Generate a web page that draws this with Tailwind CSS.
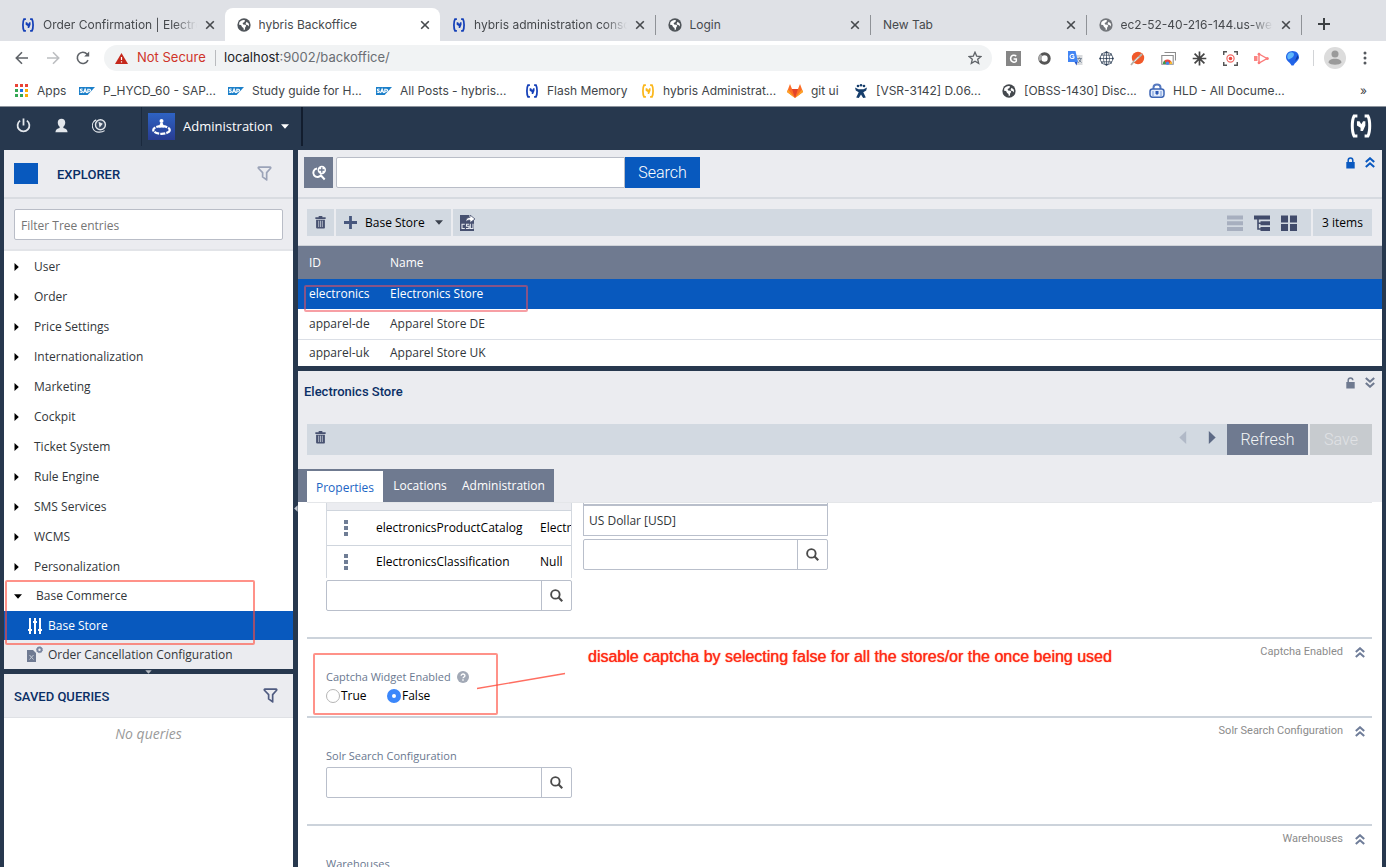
<!DOCTYPE html>
<html lang="en">
<head>
<meta charset="utf-8">
<meta name="viewport" content="width=device-width, initial-scale=1">
<title>hybris Backoffice</title>
<script src="https://cdn.jsdelivr.net/npm/@tailwindcss/browser@4"></script>
</head>
<body class="flex h-screen flex-col overflow-hidden bg-[#27384e] font-['Open_Sans',sans-serif] text-xs text-[#32363a]">

<svg class="hidden" aria-hidden="true">
  <symbol id="hy" viewBox="0 0 16 16"><path d="M5.600 1.400H3.400Q2.200 3.500 2.200 8t1.200 6.600H5.600M10.400 1.400h2.200q1.200 2.100 1.200 6.600t-1.200 6.600H10.400" fill="none" stroke="currentColor" stroke-width="2"/><path d="M5.300 4.800h1.700L8.200 6.800l1.200-2h1.500v2.900L9.300 11.400H7.700V9.200L5.300 7.600z" fill="currentColor"/></symbol>
  <symbol id="globe" viewBox="0 0 16 16"><circle cx="8" cy="8" r="7.600" fill="currentColor"/><path d="M2.600 5.200C4 2.600 6.800 1.800 9 2.400l-.4 2.200-2.200 1.200.6 1.600 2.800.2.800 1.600-1.200 1.400-.4 2.600-1.200.8-.4-2.600-1.600-1L4.600 8 2.400 7.800M11 4.400l2.600 2.200v3l-1.200-1.400-1.800-.4-.8-1.600z" fill="#fff"/></symbol>
  <symbol id="x" viewBox="0 0 10 10"><path d="M1.200 1.200l7.600 7.600M8.800 1.200L1.200 8.800" stroke="currentColor" stroke-width="1.600" fill="none"/></symbol>
  <symbol id="sap" viewBox="0 0 16 8"><path d="M0 0h16L8.600 8H0z" fill="#1b7fc9"/><path d="M3.600 2.200C2 1.600 1 2.400 1.600 3.300l1.600.9c.7 1-.6 1.800-2.200.9M4.400 6l1.700-4 1.700 4M5 4.800h2.200M8.800 6V2.200h1.600c1.600 0 1.600 2 0 2H9" fill="none" stroke="#fff" stroke-width="1.100"/></symbol>
  <symbol id="up2" viewBox="0 0 10 11"><path d="M.8 5l4.200-3.700L9.200 5M.8 10l4.200-3.700L9.200 10" fill="none" stroke="currentColor" stroke-width="2.100"/></symbol>
  <symbol id="funnel" viewBox="0 0 16 16"><path d="M2 1.200h12c.6 0 .9.700.5 1.200L10.300 7v7.800L6 11.600V7L1.500 2.400c-.4-.5-.1-1.200.5-1.200z" fill="none" stroke="currentColor" stroke-width="1.800" stroke-linejoin="round"/></symbol>
  <symbol id="trash" viewBox="0 0 12 14"><path d="M4 0h4v1.200h3.600v2H.4v-2H4zM1.200 4h9.600v8.400c0 .8-.4 1.200-1.200 1.200H2.400c-.8 0-1.200-.4-1.200-1.200z" fill="currentColor"/><path d="M4 5v7M6 5v7M8 5v7" stroke="#d2d9e1" stroke-width=".8"/></symbol>
  <symbol id="mag" viewBox="0 0 14 14"><circle cx="5.800" cy="5.800" r="4.600" fill="none" stroke="currentColor" stroke-width="2"/><path d="M9 9l4.200 4.200" stroke="currentColor" stroke-width="2.300"/></symbol>
  <symbol id="right" viewBox="0 0 5 8"><path d="M.5 0v8L4.800 4z" fill="currentColor"/></symbol>
  <symbol id="down" viewBox="0 0 8 5"><path d="M0 .3h8L4 4.800z" fill="currentColor"/></symbol>
  <symbol id="dots" viewBox="0 0 4 16"><path d="M0 0h4v4H0zM0 6h4v4H0zM0 12h4v4H0z" fill="currentColor"/></symbol>
</svg>

<!-- Browser tabs -->
<nav aria-label="Tabs" class="flex h-[41px] shrink-0 items-end bg-[#dfe1e6] pl-[9px] pr-[84px] font-[Inter,sans-serif] text-xs text-[#46494d]">
  <div class="grid min-w-0 flex-1 grid-cols-6">
  <div class="flex h-[33px] min-w-0 items-center pl-3 pr-[10px]">
    <svg class="size-[14px] shrink-0 text-[#1540b8]"><use href="#hy"/></svg>
    <a href="#" class="ml-2 min-w-0 flex-1 overflow-hidden whitespace-nowrap [mask-image:linear-gradient(to_right,#000_85%,transparent)]">Order Confirmation | Electronics</a>
    <button aria-label="Close" class="ml-2"><svg class="size-[10px]"><use href="#x"/></svg></button>
  </div>
  <div class="flex h-[33px] min-w-0 items-center rounded-t-lg bg-white pl-3 pr-[10px]">
    <svg class="size-[14px] shrink-0 text-[#50555a]"><use href="#globe"/></svg>
    <a href="#" class="ml-2 min-w-0 flex-1 overflow-hidden whitespace-nowrap">hybris Backoffice</a>
    <button aria-label="Close" class="ml-2"><svg class="size-[10px]"><use href="#x"/></svg></button>
  </div>
  <div class="flex h-[33px] min-w-0 items-center pl-3">
    <svg class="size-[14px] shrink-0 text-[#1540b8]"><use href="#hy"/></svg>
    <a href="#" class="ml-2 min-w-0 flex-1 overflow-hidden whitespace-nowrap [mask-image:linear-gradient(to_right,#000_85%,transparent)]">hybris administration console</a>
    <button aria-label="Close" class="ml-2 mr-[10px]"><svg class="size-[10px]"><use href="#x"/></svg></button>
    <span class="h-5 w-px bg-[#8f9297]"></span>
  </div>
  <div class="flex h-[33px] min-w-0 items-center pl-3">
    <svg class="size-[14px] shrink-0 text-[#50555a]"><use href="#globe"/></svg>
    <a href="#" class="ml-2 min-w-0 flex-1 overflow-hidden whitespace-nowrap">Login</a>
    <button aria-label="Close" class="ml-2 mr-[10px]"><svg class="size-[10px]"><use href="#x"/></svg></button>
    <span class="h-5 w-px bg-[#8f9297]"></span>
  </div>
  <div class="flex h-[33px] min-w-0 items-center pl-3">
    <a href="#" class="min-w-0 flex-1 overflow-hidden whitespace-nowrap">New Tab</a>
    <button aria-label="Close" class="ml-2 mr-[10px]"><svg class="size-[10px]"><use href="#x"/></svg></button>
    <span class="h-5 w-px bg-[#8f9297]"></span>
  </div>
  <div class="flex h-[33px] min-w-0 items-center pl-3">
    <svg class="size-[14px] shrink-0 text-[#74777c]"><use href="#globe"/></svg>
    <a href="#" class="ml-2 min-w-0 flex-1 overflow-hidden whitespace-nowrap [mask-image:linear-gradient(to_right,#000_85%,transparent)]">ec2-52-40-216-144.us-west-2</a>
    <button aria-label="Close" class="ml-2 mr-[10px]"><svg class="size-[10px]"><use href="#x"/></svg></button>
    <span class="h-5 w-px bg-[#8f9297]"></span>
  </div>
  </div>
  <div class="relative h-[33px] w-0"><button aria-label="New tab" class="absolute left-4 top-[10px]"><svg class="size-3" viewBox="0 0 12 12"><path d="M6 0v12M0 6h12" stroke="#3c4043" stroke-width="2"/></svg></button></div>
</nav>

<!-- Address bar -->
<div class="flex h-[34px] shrink-0 items-center bg-white pl-[15px] pr-[14px] font-[Inter,sans-serif]">
  <button aria-label="Back"><svg class="size-[14px]" viewBox="0 0 14 14"><path d="M13 7H1.500M7 1.300L1.300 7 7 12.700" fill="none" stroke="#5f6368" stroke-width="1.600"/></svg></button>
  <button aria-label="Forward" class="ml-[17px]"><svg class="size-[14px]" viewBox="0 0 14 14"><path d="M1 7h11.500M7 1.300L12.700 7 7 12.700" fill="none" stroke="#bcbec1" stroke-width="1.600"/></svg></button>
  <button aria-label="Reload" class="ml-4"><svg class="size-[14px]" viewBox="0 0 14 14"><path d="M12 9.200A5.600 5.600 0 1 1 11 3l1 1" fill="none" stroke="#5f6368" stroke-width="1.600"/><path d="M13.200.6v5H8.200z" fill="#5f6368"/></svg></button>
  <div class="ml-[14px] flex h-[26px] min-w-0 flex-1 items-center rounded-full bg-[#f1f3f4] pl-[11px] pr-[10px]">
    <svg class="h-[11px] w-[13px]" viewBox="0 0 13 11"><path d="M6.500 0L13 11H0z" fill="#c5281c"/><path d="M6.500 4v3M6.500 8.200v1.400" stroke="#fff" stroke-width="1.200"/></svg>
    <span class="ml-[9px] w-[70px] whitespace-nowrap text-[13px] text-[#cf3429]">Not Secure</span>
    <span class="ml-2 h-4 w-px bg-[#b9bbbe]"></span>
    <div class="relative ml-[8px] flex h-5 flex-1 items-center text-[13px]">
      <input aria-label="Address" value="" class="absolute inset-0 w-full bg-transparent outline-none">
      <span class="text-[#202124]">localhost</span><span class="text-[#6a6e73]">:9002/backoffice/</span>
    </div>
    <button aria-label="Bookmark"><svg class="size-[14px]" viewBox="0 0 14 14"><path d="M7 1.200l1.700 3.900 4.200.4-3.200 2.800 1 4.100L7 10.200l-3.700 2.200 1-4.100L1.100 5.500l4.200-.4z" fill="none" stroke="#5f6368" stroke-width="1.300"/></svg></button>
  </div>
  <div class="ml-[14px] flex items-center gap-4">
    <svg class="size-[15px]" viewBox="0 0 15 15"><path d="M0 0h15v15H0z" fill="#868686"/><path d="M10.200 5.200C9 3.600 5 3.600 4.600 7.500c0 4 4.700 4.300 5.700 2.600V8H7.600" fill="none" stroke="#fff" stroke-width="1.500"/></svg>
    <svg class="size-[15px]" viewBox="0 0 15 15"><circle cx="7.500" cy="7.500" r="4.700" fill="#fff" stroke="#555" stroke-width="3"/><path d="M3.500 9.500a4.700 4.700 0 0 1 1-5.500" stroke="#aaa" stroke-width="2.600" fill="none"/></svg>
    <svg class="size-[15px]" viewBox="0 0 15 15"><path d="M6 4h8.500v10H9z" fill="#d9dbde"/><path d="M0 0h7.500L10 11H0z" fill="#4285f4"/><path d="M6.500 11h3L8.500 14.500z" fill="#2a56c6"/><path d="M6 4.300C4.800 2.700 2 3.200 2 5.500S5 8 6 6.800v-1H4.300" fill="none" stroke="#fff" stroke-width="1.100"/><path d="M9.300 7.500h4.500M11.500 6.500v1M13 7.500c-.5 2.500-2 3.600-3 4.300M10.500 8.500l3 3" stroke="#7a8797" fill="none"/></svg>
    <svg class="size-[15px]" viewBox="0 0 15 15"><g fill="none" stroke="#2c3e55" stroke-width=".7"><circle cx="7.500" cy="7.500" r="6.300"/><ellipse cx="7.500" cy="7.500" rx="3" ry="6.300"/><path d="M7.500 1v13M1 7.500h13M2 4.200h11M2 10.800h11"/></g><g fill="#2c3e55"><circle cx="7.500" cy="1.200" r="1"/><circle cx="7.500" cy="13.800" r="1"/><circle cx="1.200" cy="7.500" r="1"/><circle cx="13.800" cy="7.500" r="1"/><circle cx="7.500" cy="7.500" r="1"/><circle cx="3" cy="3" r=".8"/><circle cx="12" cy="3" r=".8"/><circle cx="3" cy="12" r=".8"/><circle cx="12" cy="12" r=".8"/></g></svg>
    <svg class="size-[15px]" viewBox="0 0 15 15"><circle cx="8" cy="7" r="6.200" fill="#f1592a"/><path d="M1 14l3-3.500 6-5.500 2-2" stroke="#b9b2a8" stroke-width="1.800" fill="none"/><path d="M4.500 10.500l4-4.500" stroke="#fff" stroke-width=".8"/></svg>
    <svg class="size-[15px]" viewBox="0 0 15 15"><path d="M3.500 1.500h11v8M.8 4.500h11.400v8.700H.8z" fill="#fff" stroke="#8c8c8c" stroke-width="1.100"/><path d="M2 13a4.500 4.500 0 0 1 9 0z" fill="#e8473a"/><path d="M2 13a4.500 4.500 0 0 1 1.500-3.500L5 13z" fill="#2fa14f"/><path d="M11 13a4.500 4.500 0 0 0-1-3L8 13z" fill="#f8c22d"/><circle cx="6.500" cy="12.200" r="1.600" fill="#4285f4"/></svg>
    <svg class="size-[15px]" viewBox="0 0 15 15"><path d="M7.500 .5v14M.7 7.500h13.600M2.600 2.600l9.800 9.800M12.400 2.600l-9.800 9.800" stroke="#454545" stroke-width="1.700"/></svg>
    <svg class="size-[15px]" viewBox="0 0 15 15"><path d="M.7 4V.7H4M11 .7h3.300V4M14.300 11v3.300H11M4 14.300H.7V11" fill="none" stroke="#555" stroke-width="1.500"/><circle cx="7.500" cy="7.500" r="3.600" fill="none" stroke="#f26b66" stroke-width="1.200"/><circle cx="7.500" cy="7.500" r="1.800" fill="#ee4c46"/></svg>
    <svg class="size-[15px]" viewBox="0 0 15 15"><path d="M0 5h3.500v5H0z" fill="#fb8583"/><path d="M5 3l8 4.500L5 12z" fill="none" stroke="#fb7b79" stroke-width="1.400"/><circle cx="5" cy="3.200" r="1.400" fill="#fb7b79"/><circle cx="5" cy="11.800" r="1.400" fill="#fb7b79"/><circle cx="13.300" cy="7.500" r="1.500" fill="#fb7b79"/></svg>
    <svg class="size-[15px]" viewBox="0 0 15 15"><path d="M7.500 0c4 0 6.500 2.800 6.500 6.200 0 3.500-4 5-5.500 8.300h-2C5.500 11.500 1 10 1 6.200 1 2.800 3.500 0 7.500 0z" fill="#2264e8"/><path d="M4 2c2-1.500 5-.8 5 1.500S5.500 8 3.500 8.500C1.500 7 2 3.500 4 2z" fill="#5fb6fb"/><path d="M10 10l2.500-6 1 3z" fill="#153a9c"/></svg>
  </div>
  <span class="ml-[13px] h-4 w-px bg-[#d2d4d7]"></span>
  <button aria-label="Profile" class="ml-[10px]"><svg class="size-[22px]" viewBox="0 0 22 22"><circle cx="11" cy="11" r="11" fill="#dcdcdc"/><circle cx="11" cy="7" r="3.500" fill="#9a9a9a"/><path d="M4.500 15.500c0-2.500 3-3.800 6.500-3.800s6.500 1.300 6.500 3.800c-2 3-11 3-13 0z" fill="#9a9a9a"/></svg></button>
  <button aria-label="Menu" class="ml-3 flex w-[14px] justify-center"><svg class="h-[14px] w-1" viewBox="0 0 4 14"><g fill="#55595e"><circle cx="2" cy="2" r="1.500"/><circle cx="2" cy="7" r="1.500"/><circle cx="2" cy="12" r="1.500"/></g></svg></button>
</div>

<!-- Bookmarks -->
<nav aria-label="Bookmarks" class="flex h-8 shrink-0 items-center whitespace-nowrap border-b border-[#8d949d] bg-white pl-[15px] pr-[19px] font-[Inter,sans-serif] text-xs text-[#414549]">
  <a href="#" class="flex w-16 shrink-0 items-center gap-[9px]"><svg class="size-[13px]" viewBox="0 0 13 13"><path d="M0 0h3v3H0zM5 0h3v3H5z" fill="#ea4335"/><path d="M10 0h3v3h-3z" fill="#ea4335"/><path d="M0 5h3v3H0zM0 10h3v3H0z" fill="#34a853"/><path d="M5 5h3v3H5z" fill="#1a73e8"/><path d="M5 10h3v3H5z" fill="#34a853"/><path d="M10 5h3v3h-3zM10 10h3v3h-3z" fill="#fbad05"/></svg>Apps</a>
  <a href="#" class="flex w-[149px] shrink-0 items-center gap-2"><svg class="h-2 w-4"><use href="#sap"/></svg>P_HYCD_60 - SAP...</a>
  <a href="#" class="flex w-[148px] shrink-0 items-center gap-2"><svg class="h-2 w-4"><use href="#sap"/></svg>Study guide for H...</a>
  <a href="#" class="flex w-[149px] shrink-0 items-center gap-2"><svg class="h-2 w-4"><use href="#sap"/></svg>All Posts - hybris...</a>
  <a href="#" class="flex w-[116px] shrink-0 items-center gap-2"><svg class="size-[14px] text-[#1540b8]"><use href="#hy"/></svg>Flash Memory</a>
  <a href="#" class="flex w-[146px] shrink-0 items-center gap-2"><svg class="size-[14px] text-[#fbb71c]"><use href="#hy"/></svg>hybris Administrat...</a>
  <a href="#" class="flex w-[67px] shrink-0 items-center gap-2"><svg class="h-[14px] w-4" viewBox="0 0 16 14"><path d="M0 8L3 0l2 5h6l2-5 3 8-8 6z" fill="#fc6d26"/><path d="M5 5h6l-3 9z" fill="#e24329"/><path d="M0 8l1-2.500L8 14zM16 8l-1-2.500L8 14z" fill="#fca326"/></svg>git ui</a>
  <a href="#" class="flex w-[148px] shrink-0 items-center gap-2"><svg class="size-[14px]" viewBox="0 0 14 14"><g fill="#163e6c"><circle cx="4" cy="2" r="1.300"/><circle cx="7" cy="1.300" r="1.300"/><circle cx="10" cy="2" r="1.300"/><path d="M1 3.500l3.500 1.700h5L13 3.500l-.8 3L9.300 8.300l2.500 5.200-2.600.4L7 10.500 4.800 13.900l-2.600-.4 2.500-5.200L1.800 6.500z"/></g></svg>[VSR-3142] D.06...</a>
  <a href="#" class="flex w-[147px] shrink-0 items-center gap-2"><svg class="size-[14px] text-[#44484d]"><use href="#globe"/></svg>[OBSS-1430] Disc...</a>
  <a href="#" class="flex shrink-0 items-center gap-2"><svg class="h-[15px] w-4" viewBox="0 0 16 15"><path d="M4.500 7V4.500C4.500.5 11.500.5 11.500 4.500V7" fill="none" stroke="#5578bf" stroke-width="2"/><rect x="1" y="6" width="14" height="8.300" rx="2.500" fill="#e3ecfb" stroke="#3e66b5" stroke-width="1.500"/><path d="M6.500 8h3v2.200l-1.500 2-1.500-2z" fill="#2e59b3"/><path d="M4 8v5M12 8v5" stroke="#6f93d6"/></svg>HLD - All Docume...</a>
  <button aria-label="More bookmarks" class="ml-auto text-[#3c4043]">»</button>
</nav>

<!-- Application header -->
<header class="flex h-[43px] shrink-0 items-stretch text-white">
  <div class="flex w-[141px] items-start gap-[23px] pl-4 pt-[11px]">
    <button aria-label="Log out"><svg class="size-[15px]" viewBox="0 0 16 16"><path d="M4.400 2.800a6.300 6.300 0 1 0 7.200 0" fill="none" stroke="#e3e7ec" stroke-width="1.900"/><path d="M8 .5v7.500" stroke="#e3e7ec" stroke-width="1.900"/></svg></button>
    <button aria-label="User"><svg class="size-[15px]" viewBox="0 0 16 16"><path d="M8 .8c2.500 0 4 1.700 4 4 0 2-.9 3.700-2 4.600v1.300c2.500.6 4.300 1.500 4.500 4.500h-13c.2-3 2-3.900 4.500-4.500V9.400c-1.100-.9-2-2.600-2-4.600 0-2.300 1.500-4 4-4z" fill="#e3e7ec"/></svg></button>
    <button aria-label="Languages"><svg class="size-[15px]" viewBox="0 0 16 16"><circle cx="9" cy="7.200" r="5.300" fill="#3a4a60" stroke="#e3e7ec" stroke-width="1.500"/><path d="M7 4l4.500 2.200L9.500 8.500 8 10.500z" fill="#e3e7ec"/><path d="M4.500 2A6.800 6.800 0 0 0 8 15c2.500 0 4-.5 5.500-1.500" fill="none" stroke="#e3e7ec" stroke-width="1.200"/></svg></button>
  </div>
  <button class="mb-1 flex w-[162px] items-center border-l border-r-2 border-[#1a293d] border-r-[#121d2e] pl-[6px] text-[13px]">
    <svg class="size-[27px]" viewBox="0 0 27 27"><defs><linearGradient id="ag" x1="0" y1="0" x2="0" y2="1"><stop offset="0" stop-color="#2e63c4"/><stop offset="1" stop-color="#283c92"/></linearGradient></defs><path d="M0 0h27v27H0z" fill="url(#ag)"/><circle cx="13.500" cy="8" r="2" fill="#fff"/><path d="M12.300 10h2.400l1.600 4.500h-5.600z" fill="#fff"/><ellipse cx="13.500" cy="17" rx="8.300" ry="3.800" fill="none" stroke="#fff" stroke-width="2.200" stroke-dasharray="5 1"/></svg>
    <span class="ml-2 flex-1 whitespace-nowrap text-left">Administration</span>
    <svg class="mr-3 h-[5px] w-2"><use href="#down"/></svg>
  </button>
  <a href="#" aria-label="hybris" class="ml-auto mr-[13px] mt-[7px]"><svg class="size-6"><use href="#hy"/></svg></a>
</header>

<div class="flex min-h-0 flex-1 gap-[5px] px-1">
  <!-- Explorer -->
  <aside class="relative flex w-[289px] shrink-0 flex-col bg-white">
    <div class="flex h-[49px] shrink-0 items-center border-b-2 border-[#d9dce1] bg-[#ebecf0] px-[10px]">
      <span class="h-[21px] w-6 bg-[#0859be]"></span>
      <h2 class="ml-[19px] pt-[2px] font-[Roboto,sans-serif] text-[13px] font-medium text-[#0a2f66]">EXPLORER</h2>
      <button aria-label="Filter" class="ml-auto mr-[11px] text-[#9ba3b8]"><svg class="size-[15px]"><use href="#funnel"/></svg></button>
    </div>
    <div class="h-[52px] shrink-0 border-b-2 border-[#e2e4e8] bg-[#ebecf0] px-[10px] pt-[10px]">
      <input type="text" aria-label="Filter tree entries" placeholder="Filter Tree entries" class="h-[31px] w-full rounded-[2px] border border-[#b9bdc7] bg-white px-[6px] pt-[1px] text-xs placeholder:text-[#757575]">
    </div>
    <ul class="shrink-0 pt-[1px]">
      <li><button class="flex h-[30px] w-full items-center pl-[10px]"><svg class="mr-[15px] h-2 w-[5px] text-black"><use href="#right"/></svg>User</button></li>
      <li><button class="flex h-[30px] w-full items-center pl-[10px]"><svg class="mr-[15px] h-2 w-[5px] text-black"><use href="#right"/></svg>Order</button></li>
      <li><button class="flex h-[30px] w-full items-center pl-[10px]"><svg class="mr-[15px] h-2 w-[5px] text-black"><use href="#right"/></svg>Price Settings</button></li>
      <li><button class="flex h-[30px] w-full items-center pl-[10px]"><svg class="mr-[15px] h-2 w-[5px] text-black"><use href="#right"/></svg>Internationalization</button></li>
      <li><button class="flex h-[30px] w-full items-center pl-[10px]"><svg class="mr-[15px] h-2 w-[5px] text-black"><use href="#right"/></svg>Marketing</button></li>
      <li><button class="flex h-[30px] w-full items-center pl-[10px]"><svg class="mr-[15px] h-2 w-[5px] text-black"><use href="#right"/></svg>Cockpit</button></li>
      <li><button class="flex h-[30px] w-full items-center pl-[10px]"><svg class="mr-[15px] h-2 w-[5px] text-black"><use href="#right"/></svg>Ticket System</button></li>
      <li><button class="flex h-[30px] w-full items-center pl-[10px]"><svg class="mr-[15px] h-2 w-[5px] text-black"><use href="#right"/></svg>Rule Engine</button></li>
      <li><button class="flex h-[30px] w-full items-center pl-[10px]"><svg class="mr-[15px] h-2 w-[5px] text-black"><use href="#right"/></svg>SMS Services</button></li>
      <li><button class="flex h-[30px] w-full items-center pl-[10px]"><svg class="mr-[15px] h-2 w-[5px] text-black"><use href="#right"/></svg>WCMS</button></li>
      <li><button class="flex h-[29px] w-full items-center pl-[10px]"><svg class="mr-[15px] h-2 w-[5px] text-black"><use href="#right"/></svg>Personalization</button></li>
      <li><button class="flex h-[30px] w-full items-center pl-[10px]"><svg class="mr-[14px] h-[5px] w-2 text-black"><use href="#down"/></svg>Base Commerce</button>
        <ul>
          <li><button class="flex h-[29px] w-full items-center bg-[#0859be] pl-6 text-white"><svg class="mr-[6px] h-4 w-[14px]" viewBox="0 0 14 16"><path d="M2 0v16M7 0v16M12 0v16" stroke="#fff" stroke-width="2"/><path d="M0 11h4v2H0zM5 3h4v2H5zM10 11h4v2h-4z" fill="#fff"/></svg>Base Store</button></li>
          <li><button class="flex h-[29px] w-full items-center bg-[#ebecf0] pl-[22px]"><svg class="mr-1 h-[17px] w-[18px]" viewBox="0 0 18 17"><path d="M1 4h6l3 3v9H1z" fill="#6f7a92"/><path d="M3.500 9l4 4.500M7.500 9l-4 4.500" stroke="#c5cbd6"/><circle cx="13.500" cy="3.700" r="2.100" fill="none" stroke="#7a86a0" stroke-width="1.800"/><circle cx="13.500" cy="3.700" r="3" fill="none" stroke="#7a86a0" stroke-dasharray="1.200 1.100"/></svg>Order Cancellation Configuration</button></li>
        </ul>
      </li>
    </ul>
    <div class="flex h-[5px] shrink-0 justify-center bg-[#27384e]"><svg class="mt-[1px] h-1 w-[7px] text-[#b5bac2]"><use href="#down"/></svg></div>
    <div class="flex h-11 shrink-0 items-center border-b border-[#dfe1e5] bg-[#ebecf0] pl-[10px] pr-[15px]">
      <h2 class="pt-[2px] font-[Roboto,sans-serif] text-[13px] font-medium text-[#0a2f66]">SAVED QUERIES</h2>
      <button aria-label="Filter saved queries" class="ml-auto text-[#4f5b80]"><svg class="size-[15px]"><use href="#funnel"/></svg></button>
    </div>
    <p class="pt-[6px] text-center text-sm italic text-[#9a9a9a]">No queries</p>
    <div class="pointer-events-none absolute left-[1px] top-[430px] h-[65px] w-[250px] rounded-[2px] border-2 border-[#ff4a3a]/60"></div>
  </aside>

  <!-- Main area -->
  <main class="relative flex min-w-0 flex-1 flex-col bg-[#ebecf0]">
    <section class="flex h-[49px] shrink-0 items-start border-b-2 border-[#d6dae0] pl-[6px] pr-[7px] pt-[7px]">
      <button aria-label="Search mode" class="flex h-[31px] w-[29px] items-center justify-center bg-[#6f7a90]"><svg class="size-4" viewBox="0 0 16 16"><path d="M6 3.500a4.300 4.300 0 1 0 4.500 6M9.500 10l4.200 4.500" fill="none" stroke="#fff" stroke-width="2"/><circle cx="10.800" cy="5" r="4.200" fill="#fff"/><path d="M10.800 2.300v5.400M8.100 5h5.400" stroke="#6f7a90" stroke-width="1.300"/></svg></button>
      <input type="text" aria-label="Search text" class="ml-[3px] h-[31px] w-[289px] rounded-l-[2px] border border-[#b9bdc7] bg-white px-2">
      <button class="h-[31px] w-[75px] bg-[#0859be] font-[Roboto,sans-serif] text-base font-light text-white">Search</button>
      <button aria-label="Lock" class="ml-auto"><svg class="h-3 w-[9px]" viewBox="0 0 9 12"><path d="M2.200 6V3.200a2.300 2.300 0 0 1 4.600 0V6" fill="none" stroke="#0a59c0" stroke-width="1.500"/><path d="M.3 5h8.400v6.500H.3z" fill="#0a59c0"/></svg></button>
      <button aria-label="Collapse" class="ml-[10px] text-[#0a59c0]"><svg class="h-[11px] w-[10px]"><use href="#up2"/></svg></button>
    </section>
    <section class="flex h-[47px] shrink-0 items-start gap-[2px] border-b border-[#cfd3d9] px-[9px] pr-[10px] pt-[10px] text-black">
      <button aria-label="Delete" class="flex h-[27px] w-[27px] items-center justify-center bg-[#d2d9e1] text-[#475170]"><svg class="h-[13px] w-[11px]"><use href="#trash"/></svg></button>
      <div class="flex h-[27px] w-[115px] items-center bg-[#d2d9e1]">
        <button class="flex flex-1 items-center whitespace-nowrap pl-2"><svg class="mr-2 size-[13px]" viewBox="0 0 12 12"><path d="M6 0v12M0 6h12" stroke="#47577d" stroke-width="2.600"/></svg>Base Store</button>
        <button aria-label="More types" class="mr-2 text-[#3b424e]"><svg class="h-[5px] w-2"><use href="#down"/></svg></button>
      </div>
      <div class="flex h-[27px] flex-1 items-center bg-[#d2d9e1] pl-[7px] pr-[14px]">
        <button aria-label="Export CSV"><svg class="size-4" viewBox="0 0 16 16"><path d="M0 0h9v4.500h5V16H0z" fill="#475170"/><path d="M6 7c0-4 2-4.500 4-4.500V0l5 4-5 3.700V5.200C8 5 7 5.500 6 7z" fill="#fff" stroke="#475170" stroke-width=".8"/><path d="M4.800 9.200H2v4.300h2.800M9 9.200H6.500v2.100H9v2.200H6M10.300 8.700v4.800h2.700V8.700" fill="none" stroke="#e6eaef" stroke-width="1.100"/></svg></button>
        <button aria-label="List view" class="ml-auto"><svg class="size-4" viewBox="0 0 16 16"><path d="M0 .5h16v4H0zM0 6.300h16v4H0zM0 12h16v4H0z" fill="#a7afbf"/></svg></button>
        <button aria-label="Tree view" class="ml-[11px]"><svg class="size-4" viewBox="0 0 16 16"><path d="M0 .5h16v4H0zM6.500 6.300H16v4H6.500zM6.500 12H16v4H6.500z" fill="#414b6b"/><path d="M4 4v10h3M4 8.300h3" fill="none" stroke="#414b6b" stroke-width="1.600"/></svg></button>
        <button aria-label="Grid view" class="ml-[11px]"><svg class="size-4" viewBox="0 0 16 16"><path d="M0 .5h7v7H0zM9 .5h7v7H9zM0 9h7v7H0zM9 9h7v7H9z" fill="#414b6b"/></svg></button>
      </div>
      <span class="flex h-[27px] w-[59px] items-center justify-center whitespace-nowrap bg-[#d2d9e1]">3 items</span>
    </section>
    <table class="w-full shrink-0 table-fixed border-collapse bg-white text-left">
      <colgroup><col class="w-[81px]"><col></colgroup>
      <thead><tr class="h-[33px] bg-[#6f7a90] text-white"><th class="pl-[11px] font-normal">ID</th><th class="pl-[11px] font-normal">Name</th></tr></thead>
      <tbody>
        <tr class="h-[30px] bg-[#0859be] text-white"><td class="pl-[11px]">electronics</td><td class="pl-[11px]">Electronics Store</td></tr>
        <tr class="h-[30px] border-b border-[#dbdfe6]"><td class="pl-[11px]">apparel-de</td><td class="pl-[11px]">Apparel Store DE</td></tr>
        <tr class="h-[27px]"><td class="pl-[11px]">apparel-uk</td><td class="pl-[11px]">Apparel Store UK</td></tr>
      </tbody>
    </table>
    <div class="pointer-events-none absolute left-[6px] top-[135px] h-[27px] w-[224px] rounded-[2px] border-2 border-[#f0505a]/55"></div>
    <div class="h-[5px] shrink-0 bg-[#27384e]"></div>

    <div class="flex h-[53px] shrink-0 items-start pl-[6px] pr-[7px] pt-[6px]">
      <h2 class="pt-[6px] font-[Roboto,sans-serif] text-[13px] font-medium text-[#0a2f66]">Electronics Store</h2>
      <button aria-label="Unlock" class="ml-auto"><svg class="h-3 w-[9px]" viewBox="0 0 9 12"><path d="M2.200 6V3.200a2.300 2.300 0 0 1 4.600 0" fill="none" stroke="#6f7a90" stroke-width="1.500"/><path d="M.3 5h8.400v6.500H.3z" fill="#6f7a90"/></svg></button>
      <button aria-label="Expand" class="ml-[10px] rotate-180 text-[#6f7a90]"><svg class="h-[11px] w-[10px]"><use href="#up2"/></svg></button>
    </div>
    <div class="ml-[9px] mr-[10px] flex h-[31px] shrink-0 items-stretch">
      <div class="flex flex-1 items-center bg-[#d2d9e1] pl-2 pr-[11px] pb-1">
        <button aria-label="Delete item" class="text-[#475170]"><svg class="h-[13px] w-[11px]"><use href="#trash"/></svg></button>
        <button aria-label="Previous" class="ml-auto rotate-180 text-[#b1b9c7]"><svg class="h-[13px] w-2"><use href="#right"/></svg></button>
        <button aria-label="Next" class="ml-[21px] text-[#5d6a85]"><svg class="h-[13px] w-2"><use href="#right"/></svg></button>
      </div>
      <button class="w-[81px] bg-[#6f7a90] font-[Roboto,sans-serif] text-base font-light text-[#f3f5f7]">Refresh</button>
      <button disabled class="ml-[2px] w-[62px] bg-[#c7cbcf] font-[Roboto,sans-serif] text-base font-light text-[#e0e2e5]">Save</button>
    </div>
    <div role="tablist" class="mt-[14px] flex h-[33px] shrink-0 items-stretch self-start bg-[#6f7a90] pl-[9px] text-white">
      <button role="tab" aria-selected="true" class="mt-[2px] w-[76px] bg-white pt-[2px] text-[#1c65c4]">Properties</button>
      <button role="tab" class="w-[74px]">Locations</button>
      <button role="tab" class="w-[97px] pr-1">Administration</button>
    </div>

    <div class="min-h-0 flex-1 overflow-hidden bg-white pl-[9px] pr-[10px] text-black">
      <div class="flex h-[135px] items-start gap-[11px] overflow-hidden border-t border-[#e4e6e9] pl-[19px]">
        <div class="w-[246px]">
          <div class="border-x border-[#d3d8df]">
            <div class="h-2 border-b border-[#cfd5dd] bg-[#ebecf0]"></div>
            <table class="w-full table-fixed whitespace-nowrap">
              <colgroup><col class="w-[49px]"><col class="w-[164px]"><col></colgroup>
              <tbody>
              <tr class="h-[34px] border-b border-[#cfd5dd]"><td><button aria-label="Row menu" class="ml-[17px] block text-[#6f7d95]"><svg class="h-4 w-1"><use href="#dots"/></svg></button></td><td>electronicsProductCatalog</td><td class="overflow-hidden">Electronics</td></tr>
              <tr class="h-[33px]"><td><button aria-label="Row menu" class="ml-[17px] block text-[#6f7d95]"><svg class="h-4 w-1"><use href="#dots"/></svg></button></td><td>ElectronicsClassification</td><td>Null</td></tr>
              </tbody>
            </table>
          </div>
          <div class="mt-[2px] flex h-[31px] rounded-[2px] border border-[#b9bfcb]">
            <input type="text" aria-label="Catalogs" class="min-w-0 flex-1 px-2">
            <button aria-label="Search catalogs" class="flex w-[30px] items-center justify-center border-l border-[#b9bfcb] text-[#4a4a4a]"><svg class="size-[13px]"><use href="#mag"/></svg></button>
          </div>
        </div>
        <div class="w-[245px] text-[#32363a]">
          <div class="h-[2px] border-x border-b border-[#b9bfcb]"></div>
          <div class="flex h-[31px] items-center border border-[#b9bfcb] px-[5px]">US Dollar [USD]</div>
          <div class="mt-[3px] flex h-[31px] rounded-[2px] border border-[#b9bfcb]">
            <input type="text" aria-label="Currencies" class="min-w-0 flex-1 px-2">
            <button aria-label="Search currencies" class="flex w-[30px] items-center justify-center border-l border-[#b9bfcb] text-[#4a4a4a]"><svg class="size-[13px]"><use href="#mag"/></svg></button>
          </div>
        </div>
      </div>

      <section class="relative flex h-[79px] items-start justify-between border-t-2 border-[#ccd3db] pl-[19px] pr-[7px]">
        <div role="radiogroup" aria-labelledby="cap-label" class="pt-[29px]">
          <div class="flex h-[19px] items-center gap-[6px] whitespace-nowrap text-[11px] text-[#6a7890]"><span id="cap-label">Captcha Widget Enabled</span><button type="button" aria-label="Help" class="pb-[2px]"><svg class="size-3" viewBox="0 0 12 12"><circle cx="6" cy="6" r="6" fill="#a2a9b6"/><path d="M4.200 4.800c0-2.400 3.800-2.300 3.700 0C7.900 6 6 6 6 7.300M6 8.300v1.400" fill="none" stroke="#fff" stroke-width="1.400"/></svg></button></div>
          <div class="flex h-[18px] items-center">
            <input type="radio" name="captcha" id="cap-true" class="size-[14px] appearance-none rounded-full border border-[#b5b5b5] bg-white"><label for="cap-true" class="ml-[1px] w-[46px]">True</label>
            <input type="radio" name="captcha" id="cap-false" checked class="size-[14px] appearance-none rounded-full border-[5px] border-[#3b87fb] bg-white"><label for="cap-false" class="ml-[1px]">False</label>
          </div>
        </div>
        <button class="mt-[3px] flex h-5 items-center gap-3 font-[Roboto,sans-serif] text-[11px] text-[#8b8b8b]">Captcha Enabled<svg class="h-[11px] w-[10px] text-[#6f7d99]"><use href="#up2"/></svg></button>
        <div class="pointer-events-none absolute left-[6px] top-[14px] h-[62px] w-[185px] rounded-[2px] border-2 border-[#ff4a3a]/60"></div>
        <svg class="pointer-events-none absolute left-[170px] top-[33px] h-[18px] w-[90px]" viewBox="0 0 90 18"><path d="M0 16.500L88 1.500" stroke="#ff4a3a" stroke-opacity=".8" stroke-width="1.400"/></svg>
        <p class="absolute left-[281px] top-2 whitespace-nowrap font-['Liberation_Sans',sans-serif] text-base leading-5 text-[#ff2a14] [text-shadow:0_0_1px_#ff2a14]">disable captcha by selecting false for all the stores/or the once being used</p>
      </section>

      <section class="flex h-[108px] items-start justify-between border-t-2 border-[#ccd3db] pl-[19px] pr-[7px]">
        <div class="w-[246px] pt-7">
          <label for="solr" class="block h-[20px] text-[11px] leading-5 text-[#6a7890]">Solr Search Configuration</label>
          <div class="mt-[1px] flex h-[31px] rounded-[2px] border border-[#b9bfcb]">
            <input type="text" id="solr" class="min-w-0 flex-1 px-2">
            <button aria-label="Search Solr configuration" class="flex w-[30px] items-center justify-center border-l border-[#b9bfcb] text-[#4a4a4a]"><svg class="size-[13px]"><use href="#mag"/></svg></button>
          </div>
        </div>
        <button class="mt-[3px] flex h-5 items-center gap-3 font-[Roboto,sans-serif] text-[11px] text-[#8b8b8b]">Solr Search Configuration<svg class="h-[11px] w-[10px] text-[#6f7d99]"><use href="#up2"/></svg></button>
      </section>

      <section class="flex items-start justify-between border-t-2 border-[#ccd3db] pl-[19px] pr-[7px]">
        <div class="pt-7 text-[11px] leading-5 text-[#6a7890]">Warehouses</div>
        <button class="mt-[3px] flex h-5 items-center gap-3 font-[Roboto,sans-serif] text-[11px] text-[#8b8b8b]">Warehouses<svg class="h-[11px] w-[10px] text-[#6f7d99]"><use href="#up2"/></svg></button>
      </section>
    </div>
    <svg class="pointer-events-none absolute -left-1 top-[355px] h-[7px] w-1 rotate-180 text-[#c3c8d0]"><use href="#right"/></svg>
  </main>
</div>
</body>
</html>
